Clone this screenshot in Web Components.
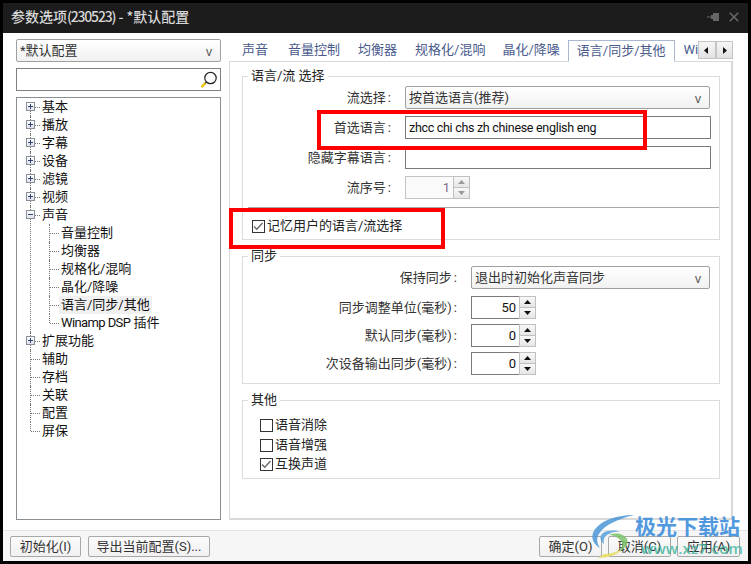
<!doctype html>
<html lang="zh">
<head>
<meta charset="utf-8">
<title>参数选项</title>
<style>
  html,body{margin:0;height:100%;background:#000}
  body{font:13px/18px Roboto,"Noto Sans CJK SC",sans-serif;color:#222;overflow:hidden}
</style>
</head>
<body>
<pref-window>
  <title-bar slot="title">参数选项<span style="letter-spacing:-1.200px">(230523)</span> - *默认配置</title-bar>

  <div slot="side" style="display:flex;flex-direction:column;gap:6px;height:100%">
    <combo-box style="width:205px;height:23px">*默认配置</combo-box>
    <search-box></search-box>
    <tree-view>
      <tree-item state="plus" first>基本</tree-item>
      <tree-item state="plus">播放</tree-item>
      <tree-item state="plus">字幕</tree-item>
      <tree-item state="plus">设备</tree-item>
      <tree-item state="plus">滤镜</tree-item>
      <tree-item state="plus">视频</tree-item>
      <tree-item state="minus">声音
        <tree-item slot="kids" first-child>音量控制</tree-item>
        <tree-item slot="kids">均衡器</tree-item>
        <tree-item slot="kids">规格化/混响</tree-item>
        <tree-item slot="kids">晶化/降噪</tree-item>
        <tree-item slot="kids" selected>语言/同步/其他</tree-item>
        <tree-item slot="kids" last><span style="letter-spacing:-.6px">Winamp DSP</span> 插件</tree-item>
      </tree-item>
      <tree-item state="plus">扩展功能</tree-item>
      <tree-item>辅助</tree-item>
      <tree-item>存档</tree-item>
      <tree-item>关联</tree-item>
      <tree-item>配置</tree-item>
      <tree-item last>屏保</tree-item>
    </tree-view>
  </div>

  <tab-bar slot="tabs"></tab-bar>

  <div slot="page" style="display:flex;flex-direction:column">
    <group-box legend="语言/流 选择" style="height:164px;margin-bottom:16px">
      <form-row label="流选择" w="162"><combo-box style="width:305px;height:23px">按首选语言(推荐)</combo-box></form-row>
      <form-row label="首选语言" w="162" style="margin-top:7px"><text-field style="width:306px">zhcc chi chs zh chinese english eng</text-field></form-row>
      <form-row label="隐藏字幕语言" w="162" style="margin-top:7px"><text-field style="width:306px"></text-field></form-row>
      <form-row label="流序号" w="162" style="margin-top:7px"><spin-box disabled style="width:65px">1</spin-box></form-row>
      <div style="height:1px;background:#a8a8a8;margin:8px 0 0 5px"></div>
      <check-box checked style="margin:9px 0 0 9px">记忆用户的语言/流选择</check-box>
    </group-box>

    <group-box legend="同步" style="height:128px;margin-bottom:16px">
      <form-row label="保持同步" w="228"><combo-box style="width:239px;height:23px">退出时初始化声音同步</combo-box></form-row>
      <form-row label="同步调整单位(毫秒)" w="228" style="margin-top:7px"><spin-box style="width:65px">50</spin-box></form-row>
      <form-row label="默认同步(毫秒)" w="228" style="margin-top:5px"><spin-box style="width:65px">0</spin-box></form-row>
      <form-row label="次设备输出同步(毫秒)" w="228" style="margin-top:5px"><spin-box style="width:65px">0</spin-box></form-row>
    </group-box>

    <group-box legend="其他" style="height:79px">
      <check-box style="margin:6px 0 0 17px">语音消除</check-box>
      <check-box style="margin:2px 0 0 17px">语音增强</check-box>
      <check-box checked style="margin:1px 0 0 17px">互换声道</check-box>
    </group-box>
  </div>

  <div slot="foot-left" style="display:flex;gap:7px">
    <push-button style="width:71px">初始化(I)</push-button>
    <push-button style="width:122px">导出当前配置(S)...</push-button>
  </div>
  <div slot="foot-right" style="display:flex;gap:6px">
    <push-button style="width:63px">确定(O)</push-button>
    <push-button style="width:63px">取消(C)</push-button>
    <push-button style="width:63px">应用(A)</push-button>
  </div>
</pref-window>

<red-mark style="left:317px;top:110px;width:330px;height:40px"></red-mark>
<red-mark style="left:229px;top:208px;width:216px;height:41px"></red-mark>
<water-mark></water-mark>

<script>
/* shared helper: open shadow root from a template string */
function shadow(el, html) {
  el.attachShadow({ mode: "open" }).innerHTML = html;
  return el.shadowRoot;
}

class PrefWindow extends HTMLElement {
  connectedCallback() {
    shadow(this, `
      <style>
        :host{display:flex;flex-direction:column;box-sizing:border-box;width:751px;height:564px;padding:3px 3px 3px 3px;background:#000}
        .body{height:497px;background:#fff;display:flex;padding:6px 15px 0 13px;box-sizing:border-box}
        .side{width:205px;height:481px;flex:none}
        .main{margin-left:8px;width:504px;display:flex;flex-direction:column;margin-top:-6px}
        .page{box-sizing:border-box;height:459px;border:1px solid #d9d9d9;border-right-width:2px;border-bottom-width:2px;padding:14px 11px 0 12px;background:#fff}
        .foot{flex:1;background:#f6f6f6;border-top:1px solid #e4e4e4;display:flex;justify-content:space-between;padding:5px 8px 0 7px;box-sizing:border-box}
      </style>
      <slot name="title"></slot>
      <div class="body">
        <div class="side"><slot name="side"></slot></div>
        <div class="main"><slot name="tabs"></slot><div class="page"><slot name="page"></slot></div></div>
      </div>
      <div class="foot"><slot name="foot-left"></slot><slot name="foot-right"></slot></div>`);
  }
}

class TitleBar extends HTMLElement {
  connectedCallback() {
    shadow(this, `
      <style>
        :host{display:flex;align-items:center;box-sizing:border-box;height:30px;background:#1c1c1c;color:#d6d6d6;font:500 14px/18px "Noto Sans CJK SC",sans-serif;padding:0 9px 0 8px;flex:none}
        .t{flex:1;margin-top:-4px}
        svg{display:block;margin-top:-3px}
      </style>
      <span class="t"><slot></slot></span>
      <svg width="13" height="10" viewBox="0 0 13 10" style="margin-right:9px"><path d="M0 5h5" stroke="#666" stroke-width="1"/><path d="M4 3h2V1h6v8H6V7H4z" fill="#666"/></svg>
      <svg width="10" height="10" viewBox="0 0 10 10"><path d="M.7.7l8.600 8.600M9.300.7L.7 9.300" stroke="#6a6a6a" stroke-width="1.500" fill="none"/></svg>`);
  }
}

class ComboBox extends HTMLElement {
  connectedCallback() {
    shadow(this, `
      <style>
        :host{display:flex;align-items:center;box-sizing:border-box;border:1px solid #a0a0a0;border-radius:2px;background:linear-gradient(#fff,#f1f1f1);color:#333;padding:0 8px 0 3px}
        span{flex:1}
        i{font:normal 12px "Open Sans",sans-serif;color:#4a4a4a;margin-top:1px}
      </style>
      <span><slot></slot></span><i>v</i>`);
  }
}

class SearchBox extends HTMLElement {
  connectedCallback() {
    shadow(this, `
      <style>
        :host{display:flex;justify-content:flex-end;align-items:center;box-sizing:border-box;width:205px;height:23px;border:1px solid #808080;background:#fff;padding-right:2px}
        svg{display:block}
      </style>
      <svg width="18" height="18" viewBox="0 0 18 18">
        <circle cx="10.500" cy="7" r="5.700" fill="#fff" stroke="#222" stroke-width="1.200"/>
        <path d="M6.300 11.200L5 12.500" stroke="#222" stroke-width="1.600"/>
        <path d="M5.400 12.200L1.500 16.200" stroke="#e8c417" stroke-width="2.600"/>
      </svg>`);
  }
}

class TreeView extends HTMLElement {
  connectedCallback() {
    shadow(this, `
      <style>
        :host{display:block;box-sizing:border-box;width:205px;flex:1;border:1px solid #8a8f94;background:#fff;color:#111}
      </style>
      <slot></slot>`);
  }
}

class TreeItem extends HTMLElement {
  connectedCallback() {
    const state = this.getAttribute("state");
    const mark = state ? `<b class="box">${state === "plus"
      ? '<svg width="9" height="9" viewBox="0 0 9 9"><path d="M2 4.500h5M4.500 2v5" stroke="#33417a" stroke-width="1"/></svg>'
      : '<svg width="9" height="9" viewBox="0 0 9 9"><path d="M2 4.500h5" stroke="#33417a" stroke-width="1"/></svg>'}</b>` : "";
    shadow(this, `
      <style>
        :host{display:block;position:relative}
        :host::before{content:"";position:absolute;left:13px;top:0;bottom:0;border-left:1px dotted #777}
        :host([first])::before{top:9px}
        :host([last])::before{bottom:auto;height:9px}
        .row{position:relative;height:18px;padding-left:25px;display:flex;align-items:center;white-space:nowrap}
        .row::before{content:"";position:absolute;left:14px;top:9px;width:9px;border-top:1px dotted #777}
        .lbl{padding:0 2px;margin-left:-2px;line-height:18px}
        :host([selected]) .lbl{background:#f0f0f0}
        .box{position:absolute;left:9px;top:4px;width:9px;height:9px;box-sizing:border-box;border:1px solid #8a8f9a;background:linear-gradient(#fff,#dfe3ea);z-index:1}
        .box svg{display:block;margin:-1px}
        .kids{margin-left:19px}
      </style>
      <div class="row">${mark}<span class="lbl"><slot></slot></span></div>
      <div class="kids"><slot name="kids"></slot></div>`);
  }
}

class TabBar extends HTMLElement {
  connectedCallback() {
    const tabs = ["声音", "音量控制", "均衡器", "规格化/混响", "晶化/降噪"];
    shadow(this, `
      <style>
        :host{display:block;position:relative;z-index:1;height:28px;color:#4a5a8c;flex:none;white-space:nowrap}
        .row{box-sizing:border-box;display:flex;gap:18px;height:21px;padding:0 0 2px 13px;align-items:center;position:relative;top:7px}
        .row span:nth-child(2){margin-left:2px}
        .row span:nth-child(5){margin-left:-1px}
        .row .on{box-sizing:border-box;height:22px;margin:0 -9px -3px -10px;padding:0 8px 1px;border:1px solid #a9b8cf;border-bottom:1px solid #fff;background:#fff;display:flex;align-items:center;align-self:flex-end}
        .clip{width:14px;overflow:hidden;flex:none}
        .sc{position:absolute;left:469px;top:8px;display:flex;width:35px;height:18px;box-sizing:border-box;border:1px solid #c4c4c4;background:#c4c4c4;gap:2px}
        .sc b{flex:1;background:linear-gradient(#f6f6f6,#e2e2e2);display:flex;align-items:center;justify-content:center}
        svg{display:block}
      </style>
      <div class="row">
        ${tabs.map(t => `<span>${t}</span>`).join("")}
        <span class="on">语言/同步/其他</span>
        <span class="clip">Wi</span>
      </div>
      <div class="sc">
        <b><svg width="5" height="7" viewBox="0 0 5 7"><path d="M4 0v7L0 3.500z" fill="#111"/></svg></b>
        <b><svg width="5" height="7" viewBox="0 0 5 7"><path d="M1 0v7l4-3.500z" fill="#111"/></svg></b>
      </div>`);
  }
}

class GroupBox extends HTMLElement {
  connectedCallback() {
    shadow(this, `
      <style>
        :host{display:block;box-sizing:border-box;border:1px solid #dcdcdc;position:relative;padding-top:9px;flex:none}
        .lg{position:absolute;left:5px;top:-10px;background:#fff;padding:0 3px 0 3px;color:#222;line-height:18px}
      </style>
      <span class="lg">${this.getAttribute("legend")}</span>
      <slot></slot>`);
  }
}

class FormRow extends HTMLElement {
  connectedCallback() {
    shadow(this, `
      <style>
        :host{display:flex;align-items:center}
        label{box-sizing:border-box;width:${this.getAttribute("w")}px;text-align:right;padding-right:14px;color:#333;white-space:nowrap;flex:none}
        b{font-weight:400;margin-left:2px}
      </style>
      <label>${this.getAttribute("label")}<b>:</b></label><slot></slot>`);
  }
}

class TextField extends HTMLElement {
  connectedCallback() {
    shadow(this, `
      <style>
        :host{display:block;box-sizing:border-box;height:23px;border:1px solid #7a7a7a;background:#fff;color:#111;padding:0 3px;font-size:12.500px;letter-spacing:-.3px;line-height:21px;white-space:nowrap}
      </style>
      <slot></slot>`);
  }
}

class SpinBox extends HTMLElement {
  connectedCallback() {
    const off = this.hasAttribute("disabled");
    const c = off ? "#999" : "#111";
    shadow(this, `
      <style>
        :host{display:flex;box-sizing:border-box;height:23px;border:1px solid ${off ? "#c4c4c4" : "#7a7a7a"};border-right:0;background:${off ? "#fafafa" : "#fff"}}
        .v{flex:1;text-align:right;padding-right:3px;line-height:21px;color:${off ? "#7c6f8c" : "#111"}}
        .b{width:17px;box-sizing:border-box;display:flex;flex-direction:column;gap:1px;background:#c0c0c0;border:1px solid #c0c0c0;margin:-1px 0}
        .b i{flex:1;background:linear-gradient(#f8f8f8,#e6e6e6);display:flex;align-items:center;justify-content:center}
        svg{display:block}
      </style>
      <span class="v"><slot></slot></span>
      <span class="b">
        <i><svg width="7" height="4" viewBox="0 0 7 4"><path d="M3.500 0L7 4H0z" fill="${c}"/></svg></i>
        <i><svg width="7" height="4" viewBox="0 0 7 4"><path d="M0 0h7L3.500 4z" fill="${c}"/></svg></i>
      </span>`);
  }
}

class CheckBox extends HTMLElement {
  connectedCallback() {
    const tick = this.hasAttribute("checked")
      ? '<path d="M2 6.500l2.800 2.800L10.500 3" stroke="#666" stroke-width="1.300" fill="none"/>' : "";
    shadow(this, `
      <style>
        :host{display:flex;align-items:center;gap:2px;height:18px;color:#222;white-space:nowrap}
        svg{display:block;flex:none}
      </style>
      <svg width="13" height="13" viewBox="0 0 13 13"><rect x=".5" y=".5" width="12" height="12" fill="#fff" stroke="#333"/>${tick}</svg>
      <span><slot></slot></span>`);
  }
}

class PushButton extends HTMLElement {
  connectedCallback() {
    shadow(this, `
      <style>
        :host{display:flex;align-items:center;justify-content:center;box-sizing:border-box;height:21px;border:1px solid #a8a8a8;border-radius:2px;background:linear-gradient(#fbfbfb,#f1f1f1);color:#333;white-space:nowrap}
      </style>
      <slot></slot>`);
  }
}

/* annotation box drawn over the screenshot */
class RedMark extends HTMLElement {
  connectedCallback() {
    shadow(this, `<style>:host{position:absolute;box-sizing:border-box;border:4px solid #f00;pointer-events:none}</style>`);
  }
}

class WaterMark extends HTMLElement {
  connectedCallback() {
    shadow(this, `
      <style>
        :host{position:absolute;left:590px;top:513px;width:155px;height:46px;pointer-events:none}
        svg{position:absolute;left:0;top:1px;opacity:.85}
        .a{position:absolute;left:45px;top:0;font:700 21px/24px "Noto Sans CJK SC",sans-serif;color:#3f8fdc;opacity:.9;white-space:nowrap}
        .b{position:absolute;left:51px;top:26px;font:600 15px/18px "Open Sans",sans-serif;color:#3fb59c;opacity:.8;letter-spacing:.2px;white-space:nowrap}
      </style>
      <svg width="46" height="44" viewBox="0 0 46 44">
        <path d="M44 1C26 1 8 7 3 19c-2 6 1 11 7 15-3-5-4-9-1-14C14 11 28 5 44 1z" fill="#4d97d8"/>
        <path d="M13 19c-4 3-3 8 1 11-1-4 0-7 3-9 4-3 9-4 13-3-5-2-12-2-17 1z" fill="#5aa2dd"/>
        <path d="M19 21c7-3 15-1 18 4 2 5-2 10-9 13 4-4 6-8 3-11-3-4-7-6-12-6z" fill="#7cc36a"/>
        <path d="M8 44c9 0 20-3 24-9-5 3-12 5-18 5z" fill="#e6de5c"/>
      </svg>
      <span class="a">极光下载站</span>
      <span class="b">www.xz7.com</span>`);
  }
}

customElements.define("pref-window", PrefWindow);
customElements.define("title-bar", TitleBar);
customElements.define("combo-box", ComboBox);
customElements.define("search-box", SearchBox);
customElements.define("tree-view", TreeView);
customElements.define("tree-item", TreeItem);
customElements.define("tab-bar", TabBar);
customElements.define("group-box", GroupBox);
customElements.define("form-row", FormRow);
customElements.define("text-field", TextField);
customElements.define("spin-box", SpinBox);
customElements.define("check-box", CheckBox);
customElements.define("push-button", PushButton);
customElements.define("red-mark", RedMark);
customElements.define("water-mark", WaterMark);
</script>
</body>
</html>
